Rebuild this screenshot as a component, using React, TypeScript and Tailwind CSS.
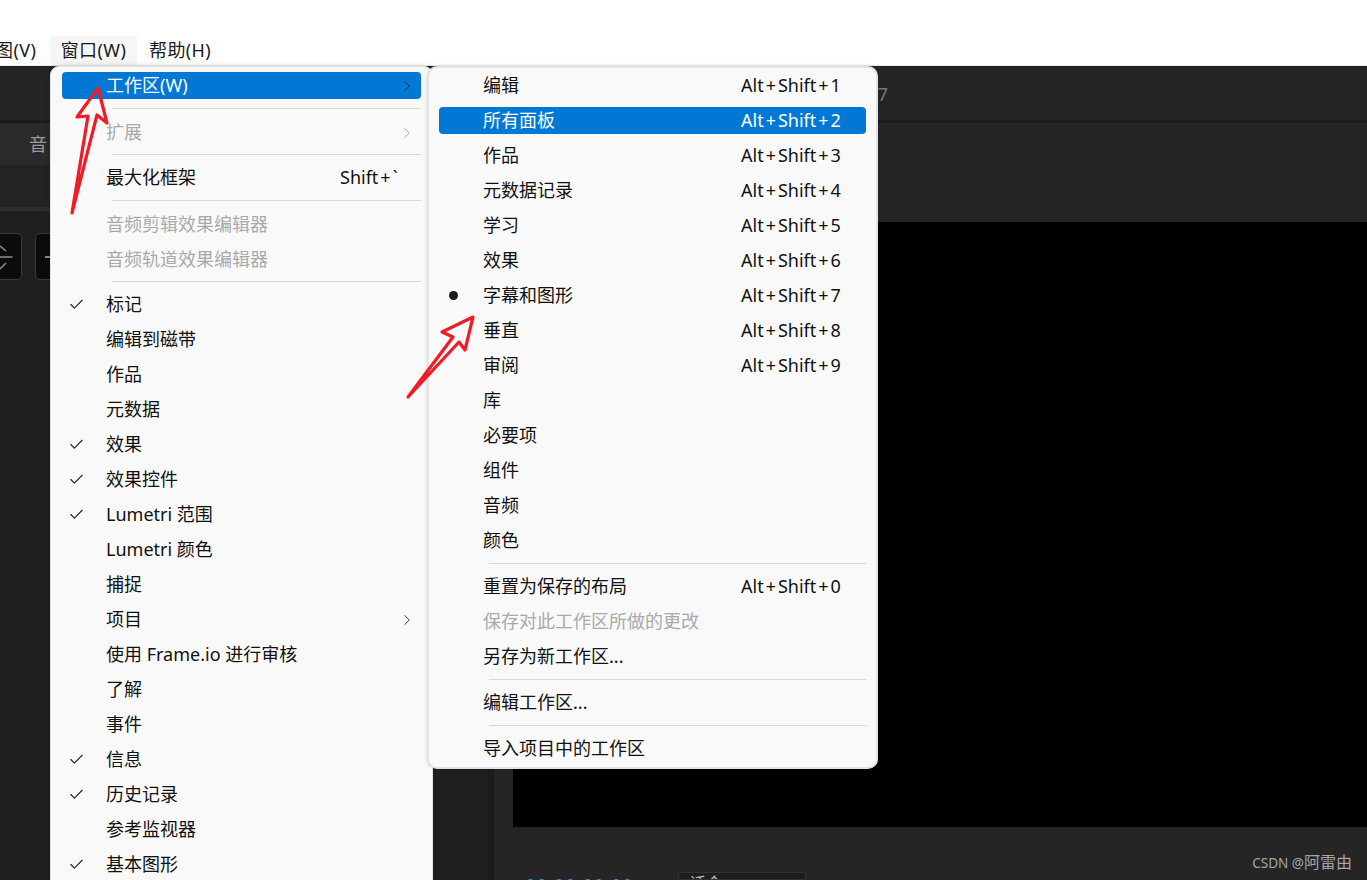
import { Check, ChevronRight } from "lucide-react";

type Item =
  | { sep: "a" | "b" | "c" }
  | { label: string; mark?: "check" | "dot"; short?: string; off?: boolean; active?: boolean; sub?: boolean };

const leftItems: Item[] = [
  { label: "工作区(W)", active: true, sub: true },
  { sep: "a" },
  { label: "扩展", off: true, sub: true },
  { sep: "b" },
  { label: "最大化框架", short: "Shift+`" },
  { sep: "a" },
  { label: "音频剪辑效果编辑器", off: true },
  { label: "音频轨道效果编辑器", off: true },
  { sep: "b" },
  { label: "标记", mark: "check" },
  { label: "编辑到磁带" },
  { label: "作品" },
  { label: "元数据" },
  { label: "效果", mark: "check" },
  { label: "效果控件", mark: "check" },
  { label: "Lumetri 范围", mark: "check" },
  { label: "Lumetri 颜色" },
  { label: "捕捉" },
  { label: "项目", sub: true },
  { label: "使用 Frame.io 进行审核" },
  { label: "了解" },
  { label: "事件" },
  { label: "信息", mark: "check" },
  { label: "历史记录", mark: "check" },
  { label: "参考监视器" },
  { label: "基本图形", mark: "check" },
];

const rightItems: Item[] = [
  { label: "编辑", short: "Alt+Shift+1" },
  { label: "所有面板", short: "Alt+Shift+2", active: true },
  { label: "作品", short: "Alt+Shift+3" },
  { label: "元数据记录", short: "Alt+Shift+4" },
  { label: "学习", short: "Alt+Shift+5" },
  { label: "效果", short: "Alt+Shift+6" },
  { label: "字幕和图形", short: "Alt+Shift+7", mark: "dot" },
  { label: "垂直", short: "Alt+Shift+8" },
  { label: "审阅", short: "Alt+Shift+9" },
  { label: "库" },
  { label: "必要项" },
  { label: "组件" },
  { label: "音频" },
  { label: "颜色" },
  { sep: "c" },
  { label: "重置为保存的布局", short: "Alt+Shift+0" },
  { label: "保存对此工作区所做的更改", off: true },
  { label: "另存为新工作区..." },
  { sep: "c" },
  { label: "编辑工作区..." },
  { sep: "c" },
  { label: "导入项目中的工作区" },
];

function Shortcut({ text }: { text: string }) {
  const parts = text.split("+");
  return (
    <div className="whitespace-nowrap">
      {parts.map((p, i) => (
        <span key={i}>
          {i > 0 && <span className="px-[2px]">+</span>}
          {p}
        </span>
      ))}
    </div>
  );
}

function Rows({ items, labelClass, chevronClass }: { items: Item[]; labelClass: string; chevronClass: string }) {
  return (
    <>
      {items.map((it, i) => {
        if ("sep" in it) {
          const h = it.sep === "a" ? "h-[12px] pb-[2px]" : it.sep === "b" ? "h-[10px] pb-[2px]" : "h-[11px] pb-[1px]";
          return (
            <div key={i} className={`flex items-center pl-[50px] ${h}`}>
              <div className="h-px w-full bg-[#d9d9d9]" />
            </div>
          );
        }
        const color = it.active ? "text-white" : it.off ? "text-[#a9a9a9]" : "text-[#111111]";
        return (
          <div key={i} className="flex h-[35px] items-center py-1">
            <div className={`flex h-[27px] w-full items-center rounded-[4px] ${it.active ? "bg-[#0078d4]" : ""} ${color}`}>
              <div className="flex w-[44px] shrink-0 items-center pl-[6px]">
                {it.mark === "check" && <Check size={17} strokeWidth={1.6} className="text-[#222222]" />}
                {it.mark === "dot" && <span className="ml-[4px] block h-[9px] w-[9px] rounded-full bg-[#1a1a1a]" />}
              </div>
              <div className={`shrink-0 whitespace-nowrap ${labelClass}`}>{it.label}</div>
              {it.short && <Shortcut text={it.short} />}
              {it.sub && (
                <ChevronRight
                  size={18}
                  strokeWidth={1.3}
                  className={`${chevronClass} ${it.active ? "text-[#20303f]" : it.off ? "text-[#a9a9a9]" : "text-[#333333]"}`}
                />
              )}
            </div>
          </div>
        );
      })}
    </>
  );
}

export default function App() {
  return (
    <div
      className="relative flex h-[880px] w-[1367px] flex-col overflow-hidden bg-white text-[18px] leading-[27px]"
      style={{ fontFamily: '"Noto Sans", "Noto Sans CJK SC", sans-serif' }}
    >
      {/* menu bar */}
      <div className="flex h-[65px] shrink-0 items-end bg-white tracking-[0.4px] text-[#1a1a1a]">
        <div className="ml-[-5px] flex h-[29px] w-[55px] shrink-0 items-center">图(V)</div>
        <div className="flex h-[29px] w-[87px] shrink-0 items-center justify-center bg-[#f6f6f6]">窗口(W)</div>
        <div className="flex h-[29px] items-center pl-[12px]">帮助(H)</div>
      </div>
      <div className="h-px shrink-0 bg-[#e6e6e6]" />

      {/* dark application */}
      <div className="flex min-h-0 flex-1 bg-[#252525]">
        <div className="flex w-[488px] shrink-0 flex-col">
          <div className="h-[54px] shrink-0 bg-[#242424]" />
          <div className="h-[3px] shrink-0 bg-[#1b1b1b]" />
          <div className="flex h-[42px] shrink-0 items-center bg-[#2a2a2a] pl-[29px] text-[#9a9a9a]">音</div>
          <div className="h-[42px] shrink-0 bg-[#232323]" />
          <div className="h-[4px] shrink-0 bg-[#2e2e2e]" />
          <div className="flex flex-1 items-start gap-[13px] bg-[#1f1f1f] pt-[22px]">
            <div className="-ml-[26px] flex h-[47px] w-[48px] items-center justify-end rounded-[5px] border border-[#3a3a3a] bg-[#0b0b0b] pr-[8px]">
              <svg width="13" height="30" viewBox="0 0 13 30" fill="none" stroke="#8a8a8a" strokeWidth="1.6">
                <path d="M0 15H12.5" />
                <path d="M0 4L6 9" />
                <path d="M0 27L6 21" />
              </svg>
            </div>
            <div className="flex h-[47px] w-[48px] items-center rounded-[5px] border border-[#3a3a3a] bg-[#0b0b0b] pl-[9px]">
              <div className="h-[2px] w-[10px] bg-[#8a8a8a]" />
            </div>
          </div>
        </div>
        <div className="w-[6px] shrink-0 bg-[#1b1b1b]" />
        <div className="flex min-w-0 flex-1 flex-col">
          <div className="flex h-[54px] shrink-0 items-center justify-end bg-[#242424] pr-[479px] pt-[2px] text-[#777777]">7</div>
          <div className="h-[3px] shrink-0 bg-[#1b1b1b]" />
          <div className="h-[99px] shrink-0" />
          <div className="ml-[19px] h-[605px] shrink-0 bg-black" />
          <div className="relative flex flex-1 items-end pl-[32px]">
            <div className="w-[152px] shrink-0 translate-y-[19px] whitespace-nowrap text-[16px] tracking-[2px] text-[#3f8fe0]">00:00:00:00</div>
            <div className="h-[8px] w-[128px] overflow-hidden rounded-t-[3px] border border-[#333333] bg-[#1d1d1d] pl-[11px] text-[16px] leading-[20px] text-[#bdbdbd]">
              适合
            </div>
            <div className="absolute right-[15px] top-[24px] whitespace-nowrap text-[13.5px] leading-[22px] text-[#a5a5a5]">
              CSDN @<span className="text-[16px]">阿雷由</span>
            </div>
          </div>
        </div>
      </div>

      {/* window menu */}
      <div className="absolute left-[50px] top-[66px] h-[830px] w-[383px] rounded-t-[9px] border border-[#e3e3e3] bg-[#f9f9f9] px-[11px] pt-[1px] shadow-[0_0_6px_rgba(0,0,0,0.15)]">
        <Rows items={leftItems} labelClass="w-[234px]" chevronClass="absolute left-[347px]" />
      </div>

      {/* workspace submenu */}
      <div className="absolute left-[427px] top-[66px] h-[703px] w-[451px] rounded-[10px] border-2 border-[#e3e3e3] bg-[#f9f9f9] pl-[10px] pr-[10px] shadow-[0_0_4px_rgba(0,0,0,0.12)]">
        <Rows items={rightItems} labelClass="w-[258px]" chevronClass="hidden" />
      </div>

      {/* annotation arrows */}
      <svg className="absolute left-[65px] top-[80px]" width="50" height="140" viewBox="65 80 50 140" fill="none">
        <path d="M98 88L77 117L88 116L72 213L97 115L107 123Z" stroke="#ee1c25" strokeWidth="3.2" strokeLinejoin="round" />
      </svg>
      <svg className="absolute left-[400px] top-[310px]" width="80" height="95" viewBox="400 310 80 95" fill="none">
        <path d="M473 317L442 332L453 337L408 397L459 342L465 350Z" stroke="#ee1c25" strokeWidth="3.2" strokeLinejoin="round" />
      </svg>
    </div>
  );
}
